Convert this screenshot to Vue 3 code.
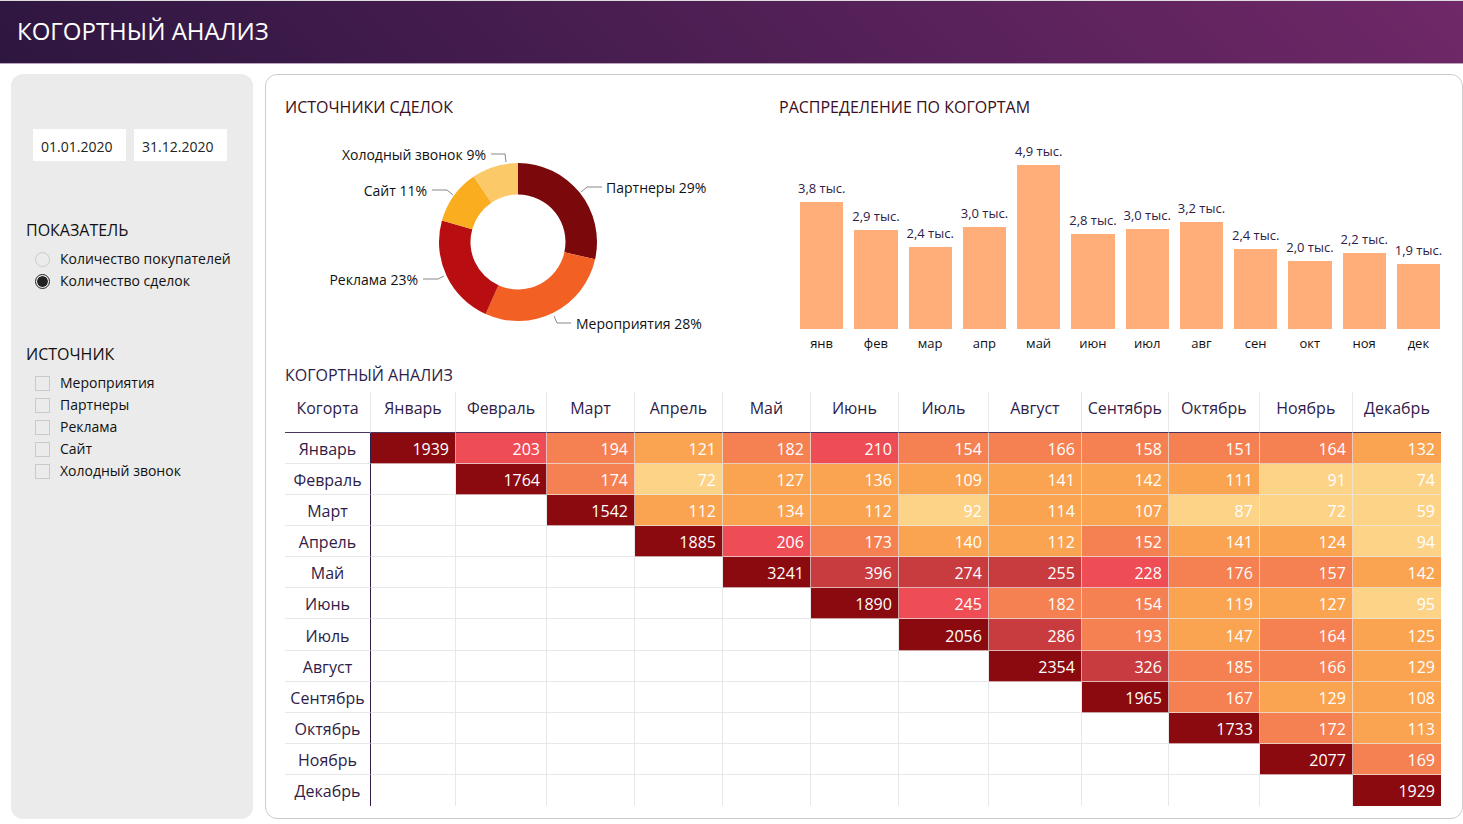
<script setup>
import { ref } from 'vue'

const dateFrom = ref('01.01.2020')
const dateTo = ref('31.12.2020')

const metrics = ['Количество покупателей', 'Количество сделок']
const metric = ref('Количество сделок')

const sources = ['Мероприятия', 'Партнеры', 'Реклама', 'Сайт', 'Холодный звонок']
const picked = ref([])

// Donut geometry, in viewBox units
const cx = 233
const cy = 123
const outer = 79
const inner = 47.5

function point(radius, degrees) {
  const a = (degrees * Math.PI) / 180
  return `${(cx + radius * Math.sin(a)).toFixed(2)} ${(cy - radius * Math.cos(a)).toFixed(2)}`
}

function arc(from, to) {
  return [
    `M${point(outer, from)}`,
    `A${outer} ${outer} 0 0 1 ${point(outer, to)}`,
    `L${point(inner, to)}`,
    `A${inner} ${inner} 0 0 0 ${point(inner, from)}Z`,
  ].join('')
}

const slices = [
  { label: 'Партнеры 29%', color: '#7b090c', from: 0, to: 102.6, line: '296,73 302,68 317,68', x: 321, y: 74, anchor: 'start' },
  { label: 'Мероприятия 28%', color: '#f26024', from: 102.6, to: 204.2, line: '269,197 272,204 286,204', x: 291, y: 210, anchor: 'start' },
  { label: 'Реклама 23%', color: '#b90e11', from: 204.2, to: 285.7, line: '138,160 153,160 159,157', x: 133, y: 166, anchor: 'end' },
  { label: 'Сайт 11%', color: '#fbad20', from: 285.7, to: 325.9, line: '147,71 162,71 168,76', x: 142, y: 77, anchor: 'end' },
  { label: 'Холодный звонок 9%', color: '#fcc969', from: 325.9, to: 360, line: '206,35 220,35 221,43', x: 201, y: 41, anchor: 'end' },
]

// size is the bar height in pixels
const bars = [
  { month: 'янв', value: '3,8', size: 127 },
  { month: 'фев', value: '2,9', size: 99 },
  { month: 'мар', value: '2,4', size: 82 },
  { month: 'апр', value: '3,0', size: 102 },
  { month: 'май', value: '4,9', size: 164 },
  { month: 'июн', value: '2,8', size: 95 },
  { month: 'июл', value: '3,0', size: 100 },
  { month: 'авг', value: '3,2', size: 107 },
  { month: 'сен', value: '2,4', size: 80 },
  { month: 'окт', value: '2,0', size: 68 },
  { month: 'ноя', value: '2,2', size: 76 },
  { month: 'дек', value: '1,9', size: 65 },
]

const months = [
  'Январь', 'Февраль', 'Март', 'Апрель', 'Май', 'Июнь',
  'Июль', 'Август', 'Сентябрь', 'Октябрь', 'Ноябрь', 'Декабрь',
]
const columnShares = [86, 85, 91, 88, 88, 88, 88, 90, 93, 87, 91, 93, 88]
const shareTotal = columnShares.reduce((sum, n) => sum + n, 0)

const cohorts = [
  [1939, 203, 194, 121, 182, 210, 154, 166, 158, 151, 164, 132],
  [1764, 174, 72, 127, 136, 109, 141, 142, 111, 91, 74],
  [1542, 112, 134, 112, 92, 114, 107, 87, 72, 59],
  [1885, 206, 173, 140, 112, 152, 141, 124, 94],
  [3241, 396, 274, 255, 228, 176, 157, 142],
  [1890, 245, 182, 154, 119, 127, 95],
  [2056, 286, 193, 147, 164, 125],
  [2354, 326, 185, 166, 129],
  [1965, 167, 129, 108],
  [1733, 172, 113],
  [2077, 169],
  [1929],
]
const rows = cohorts.map((values, i) => ({
  month: months[i],
  cells: [...Array(i).fill(null), ...values],
}))

function heat(value) {
  if (value === null) return 'empty'
  if (value >= 1000) return 'h6'
  if (value >= 250) return 'h5'
  if (value >= 200) return 'h4'
  if (value >= 150) return 'h3'
  if (value >= 100) return 'h2'
  return 'h1'
}
</script>

<template>
  <div class="page">
    <header class="top">
      <h1>КОГОРТНЫЙ АНАЛИЗ</h1>
    </header>

    <div class="body">
      <aside class="filters">
        <div class="dates">
          <input v-model="dateFrom" type="text" aria-label="Дата начала" />
          <input v-model="dateTo" type="text" aria-label="Дата окончания" />
        </div>

        <fieldset class="group">
          <legend>ПОКАЗАТЕЛЬ</legend>
          <label v-for="m in metrics" :key="m" class="option">
            <input v-model="metric" type="radio" name="metric" :value="m" />
            <span>{{ m }}</span>
          </label>
        </fieldset>

        <fieldset class="group">
          <legend>ИСТОЧНИК</legend>
          <label v-for="s in sources" :key="s" class="option">
            <input v-model="picked" type="checkbox" :value="s" />
            <span>{{ s }}</span>
          </label>
        </fieldset>
      </aside>

      <main class="panel">
        <div class="charts">
          <section>
            <h2>ИСТОЧНИКИ СДЕЛОК</h2>
            <svg class="donut" viewBox="0 0 494 244" role="img" aria-label="Источники сделок">
              <g v-for="s in slices" :key="s.label">
                <path :d="arc(s.from, s.to)" :fill="s.color" />
                <polyline :points="s.line" />
                <text :x="s.x" :y="s.y" :text-anchor="s.anchor">{{ s.label }}</text>
              </g>
            </svg>
          </section>

          <section class="distribution">
            <h2>РАСПРЕДЕЛЕНИЕ ПО КОГОРТАМ</h2>
            <div class="bars">
              <div v-for="b in bars" :key="b.month" class="column">
                <span class="value">{{ b.value }} тыс.</span>
                <div class="bar" :style="{ height: b.size + 'px' }"></div>
                <span class="month">{{ b.month }}</span>
              </div>
            </div>
          </section>
        </div>

        <h2>КОГОРТНЫЙ АНАЛИЗ</h2>
        <table>
          <colgroup>
            <col v-for="(w, i) in columnShares" :key="i" :style="{ width: (w / shareTotal) * 100 + '%' }" />
          </colgroup>
          <thead>
            <tr>
              <th scope="col">Когорта</th>
              <th v-for="m in months" :key="m" scope="col">{{ m }}</th>
            </tr>
          </thead>
          <tbody>
            <tr v-for="r in rows" :key="r.month">
              <th scope="row">{{ r.month }}</th>
              <td v-for="(c, i) in r.cells" :key="i" :class="heat(c)">{{ c }}</td>
            </tr>
          </tbody>
        </table>
      </main>
    </div>
  </div>
</template>

<style>
body {
  background: #fff;
}
</style>

<style scoped>
.page {
  min-height: 100vh;
  box-sizing: border-box;
  display: flex;
  flex-direction: column;
  font-family: "Open Sans", "Noto Sans", sans-serif;
  font-size: 14px;
  color: #111;
}

.top {
  display: flex;
  align-items: center;
  height: 62px;
  padding: 0 17px;
  border-top: 1px solid #ddd;
  border-bottom: 1px solid #b9a5bb;
  background: linear-gradient(45deg, #2d1640, #702868) padding-box;
}

h1 {
  margin: 0 0 2px;
  font-size: 24px;
  line-height: 32px;
  font-weight: 400;
  color: #fff;
}

h2,
legend {
  margin: 0;
  padding: 0;
  font-size: 16px;
  line-height: 24px;
  font-weight: 400;
}

.body {
  flex: 1;
  display: flex;
  gap: 12px;
  padding: 10px 0 5px 11px;
}

.filters {
  flex: none;
  width: 242px;
  box-sizing: border-box;
  padding: 55px 15px 0;
  border-radius: 12px;
  background: #ebebeb;
}

.dates {
  display: flex;
  gap: 8px;
  margin: 0 11px 57px 7px;
}

.dates input {
  flex: 1;
  width: 100%;
  min-width: 0;
  box-sizing: border-box;
  height: 32px;
  padding: 2px 8px 0;
  border: 0;
  background: #fff;
  font: inherit;
  color: #222;
}

.group {
  margin: 0 0 50px;
  padding: 0;
  border: 0;
  min-width: 0;
}

legend {
  margin-bottom: 6px;
}

.option {
  display: flex;
  align-items: center;
  gap: 10px;
  padding-left: 9px;
  line-height: 22px;
  white-space: nowrap;
}

.option input {
  appearance: none;
  flex: none;
  box-sizing: border-box;
  width: 15px;
  height: 15px;
  margin: 0;
  border: 1px solid #c8ccc8;
}

.option input[type="radio"] {
  border-radius: 50%;
}

.option input:checked {
  border-color: #222;
  background: radial-gradient(circle, #222 5px, transparent 6px) content-box;
  padding: 1px;
}

.panel {
  flex: 1;
  min-width: 0;
  box-sizing: border-box;
  padding: 20px 21px 12px 19px;
  border: 1px solid #ccc;
  border-radius: 12px;
}

.charts {
  display: grid;
  grid-template-columns: 494fr 662fr;
}

.charts h2 {
  color: #3a0d20;
}

.donut {
  display: block;
  width: 100%;
}

.donut text {
  font-size: 14px;
  fill: #111;
}

.donut polyline {
  fill: none;
  stroke: #888;
}

.distribution {
  display: flex;
  flex-direction: column;
  min-width: 0;
}

.bars {
  flex: 1;
  display: flex;
  align-items: flex-end;
  gap: 11px;
  padding: 0 1px 10px 21px;
}

.column {
  flex: 1 1 0;
  min-width: 0;
  display: flex;
  flex-direction: column;
  align-items: center;
  font-size: 13px;
  line-height: 20px;
  white-space: nowrap;
}

.value {
  margin-bottom: 4px;
  color: #2f1c48;
}

.bar {
  width: 100%;
  background: #ffae7a;
}

.month {
  margin-top: 4px;
}

.panel > h2 {
  color: #2f1c48;
}

table {
  width: 100%;
  height: 414px;
  margin-top: 5px;
  table-layout: fixed;
  border-collapse: separate;
  border-spacing: 0;
  font-size: 16px;
  line-height: 24px;
  color: #2f1c48;
}

th,
td {
  box-sizing: border-box;
  height: 31px;
  padding: 2px 0 0;
  border-right: 1px solid #e8e8e8;
  border-bottom: 1px solid #e8e8e8;
  font-weight: 400;
  text-align: center;
  white-space: nowrap;
}

td {
  padding-right: 6px;
  border-color: rgba(232, 232, 232, 0.7);
  text-align: right;
  color: #fff;
}

thead th {
  height: 41px;
  padding: 0 0 8px;
  border-bottom-color: #4a3560;
}

tbody th {
  border-right-color: #2f1c48;
}

th:last-child,
td:last-child {
  border-right: 0;
}

tbody tr:last-child > * {
  border-bottom: 0;
}

.empty {
  border-color: #e8e8e8;
}

.h1 {
  background: #fdd388;
}

.h2 {
  background: #faa451;
}

.h3 {
  background: #f58152;
}

.h4 {
  background: #ef4d55;
}

.h5 {
  background: #c83c40;
}

.h6 {
  background: #8a0a0f;
}
</style>
